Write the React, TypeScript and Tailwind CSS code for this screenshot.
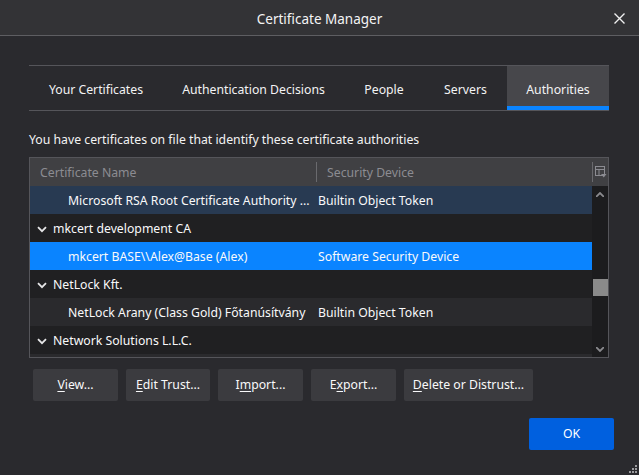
import React from "react";

const font = { fontFamily: '"Noto Sans", "Open Sans", sans-serif' };

function Chevron() {
  return (
    <svg width="10" height="7" viewBox="0 0 10 7" className="shrink-0">
      <path d="M1 1.2 L5 5.2 L9 1.2" fill="none" stroke="#e6e6e8" strokeWidth="1.8" />
    </svg>
  );
}

function U({ children }: { children: React.ReactNode }) {
  return <span className="underline underline-offset-2">{children}</span>;
}

export default function App() {
  const tabs = [
    { label: "Your Certificates", w: "w-[134px]" },
    { label: "Authentication Decisions", w: "w-[181px]" },
    { label: "People", w: "w-[80px]" },
    { label: "Servers", w: "w-[83px]" },
  ];
  return (
    <div className="w-[639px] h-[475px] bg-[#2a2a2e] flex flex-col relative overflow-hidden text-[12.25px] text-[#f9f9fa]" style={font}>
      {/* Title bar */}
      <div className="h-[36px] shrink-0 bg-[#333336] border-b border-[#5e5e62] relative flex items-center justify-center">
        <span className="text-[13.5px] text-[#f4f4f5] mt-[4px]">Certificate Manager</span>
        <svg className="absolute right-[14px] top-[13px]" width="11" height="11" viewBox="0 0 11 11">
          <path d="M0.5 0.5 L10.5 10.5 M10.5 0.5 L0.5 10.5" stroke="#f0f0f0" strokeWidth="1.4" />
        </svg>
      </div>

      <div className="flex flex-col pl-[29px] pr-[30px]">
        {/* Tabs */}
        <div className="mt-[29px] flex border-y border-[#55555a] h-[46px]">
          {tabs.map((t) => (
            <div key={t.label} className={`${t.w} h-full flex items-center justify-center pt-[5px] text-[#f3f3f4]`}>
              {t.label}
            </div>
          ))}
          <div className="w-[102px] h-full flex flex-col bg-[#47474b]">
            <div className="flex-1 flex items-center justify-center pt-[8px] text-[#f3f3f4]">Authorities</div>
            <div className="h-[4px] bg-[#0a84ff]" />
          </div>
        </div>

        <div className="mt-[20px] h-[18px] leading-[18px] text-[#f3f3f4]">
          You have certificates on file that identify these certificate authorities
        </div>

        {/* Tree */}
        <div className="mt-[8px] w-[580px] h-[201px] border border-[#55555a] flex flex-col bg-[#202022]">
          <div className="h-[28px] shrink-0 bg-[#404043] flex items-center text-[#8c8c92]">
            <div className="w-[286px] pl-[10px] pt-[2px]">Certificate Name</div>
            <div className="w-px h-[20px] bg-[#6a6a6e]" />
            <div className="flex-1 pl-[10px] pt-[2px]">Security Device</div>
            <div className="w-px h-[20px] bg-[#6a6a6e]" />
            <div className="w-[15px] flex justify-center">
              <svg width="12" height="12" viewBox="0 0 12 12">
                <rect x="0.5" y="0.5" width="9" height="9" fill="none" stroke="#8c8c92" />
                <path d="M0.5 3.5 H9.5 M4 3.5 V9.5" stroke="#8c8c92" />
                <path d="M6 8 H11.5 L8.75 11.5 Z" fill="#8c8c92" />
              </svg>
            </div>
          </div>
          <div className="flex flex-1 min-h-0">
            <div className="flex-1 flex flex-col overflow-hidden">
              <div className="h-[28px] shrink-0 bg-[#283a52] flex items-center pt-[2px]">
                <div className="w-[288px] pl-[38px] whitespace-nowrap">Microsoft RSA Root Certificate Authority ...</div>
                <div className="flex-1">Builtin Object Token</div>
              </div>
              <div className="h-[28px] shrink-0 bg-[#202022] flex items-center pl-[7px] gap-[6px] pt-[2px]">
                <Chevron />
                <span>mkcert development CA</span>
              </div>
              <div className="h-[28px] shrink-0 bg-[#0a84ff] flex items-center pt-[2px]">
                <div className="w-[288px] pl-[38px] whitespace-nowrap">mkcert BASE\\Alex@Base (Alex)</div>
                <div className="flex-1">Software Security Device</div>
              </div>
              <div className="h-[28px] shrink-0 bg-[#202022] flex items-center pl-[7px] gap-[6px] pt-[2px]">
                <Chevron />
                <span>NetLock Kft.</span>
              </div>
              <div className="h-[28px] shrink-0 bg-[#2a2a2d] flex items-center pt-[2px]">
                <div className="w-[288px] pl-[38px] whitespace-nowrap">NetLock Arany (Class Gold) Főtanúsítvány</div>
                <div className="flex-1">Builtin Object Token</div>
              </div>
              <div className="h-[28px] shrink-0 bg-[#202022] flex items-center pl-[7px] gap-[6px] pt-[2px]">
                <Chevron />
                <span>Network Solutions L.L.C.</span>
              </div>
              <div className="h-[28px] shrink-0 bg-[#2a2a2d]" />
            </div>
            {/* Scrollbar */}
            <div className="w-[16px] bg-[#1c1c1e] flex flex-col items-center">
              <svg className="mt-[6px]" width="8" height="5" viewBox="0 0 8 5">
                <path d="M0 5 L4 1 L8 5" fill="none" stroke="#8a8a8e" strokeWidth="1.8" />
              </svg>
              <div className="mt-[82px] w-[15px] h-[17px] bg-[#8a8a8a]" />
              <div className="flex-1" />
              <svg className="mb-[5px]" width="8" height="5" viewBox="0 0 8 5">
                <path d="M0 0 L4 4 L8 0" fill="none" stroke="#8a8a8e" strokeWidth="1.8" />
              </svg>
            </div>
          </div>
        </div>

        {/* Buttons */}
        <div className="mt-[11px] flex gap-[8px] pl-[4px]">
          <button className="w-[85px] h-[32px] pt-[1px] bg-[#3b3b3f] rounded-[2px] text-[#f9f9fa]"><U>V</U>iew...</button>
          <button className="w-[84px] h-[32px] pt-[1px] bg-[#3b3b3f] rounded-[2px] text-[#f9f9fa]"><U>E</U>dit Trust...</button>
          <button className="w-[85px] h-[32px] pt-[1px] bg-[#3b3b3f] rounded-[2px] text-[#f9f9fa]">I<U>m</U>port...</button>
          <button className="w-[85px] h-[32px] pt-[1px] bg-[#3b3b3f] rounded-[2px] text-[#f9f9fa]">E<U>x</U>port...</button>
          <button className="w-[129px] h-[32px] pt-[1px] bg-[#3b3b3f] rounded-[2px] text-[#f9f9fa]"><U>D</U>elete or Distrust...</button>
        </div>

        <div className="mt-[17px] flex justify-end -mr-[5px]">
          <button className="w-[85px] h-[32px] pt-[1px] bg-[#0060df] rounded-[2px] text-white">OK</button>
        </div>
      </div>

      {/* resize grip */}
      <svg className="absolute right-[1px] bottom-[1px]" width="10" height="10" viewBox="0 0 10 10">
        <rect x="7" y="1" width="2" height="2" fill="#9a9a9e" />
        <rect x="4" y="4" width="2" height="2" fill="#9a9a9e" />
        <rect x="7" y="4" width="2" height="2" fill="#9a9a9e" />
        <rect x="1" y="7" width="2" height="2" fill="#9a9a9e" />
        <rect x="4" y="7" width="2" height="2" fill="#9a9a9e" />
        <rect x="7" y="7" width="2" height="2" fill="#9a9a9e" />
      </svg>
    </div>
  );
}
